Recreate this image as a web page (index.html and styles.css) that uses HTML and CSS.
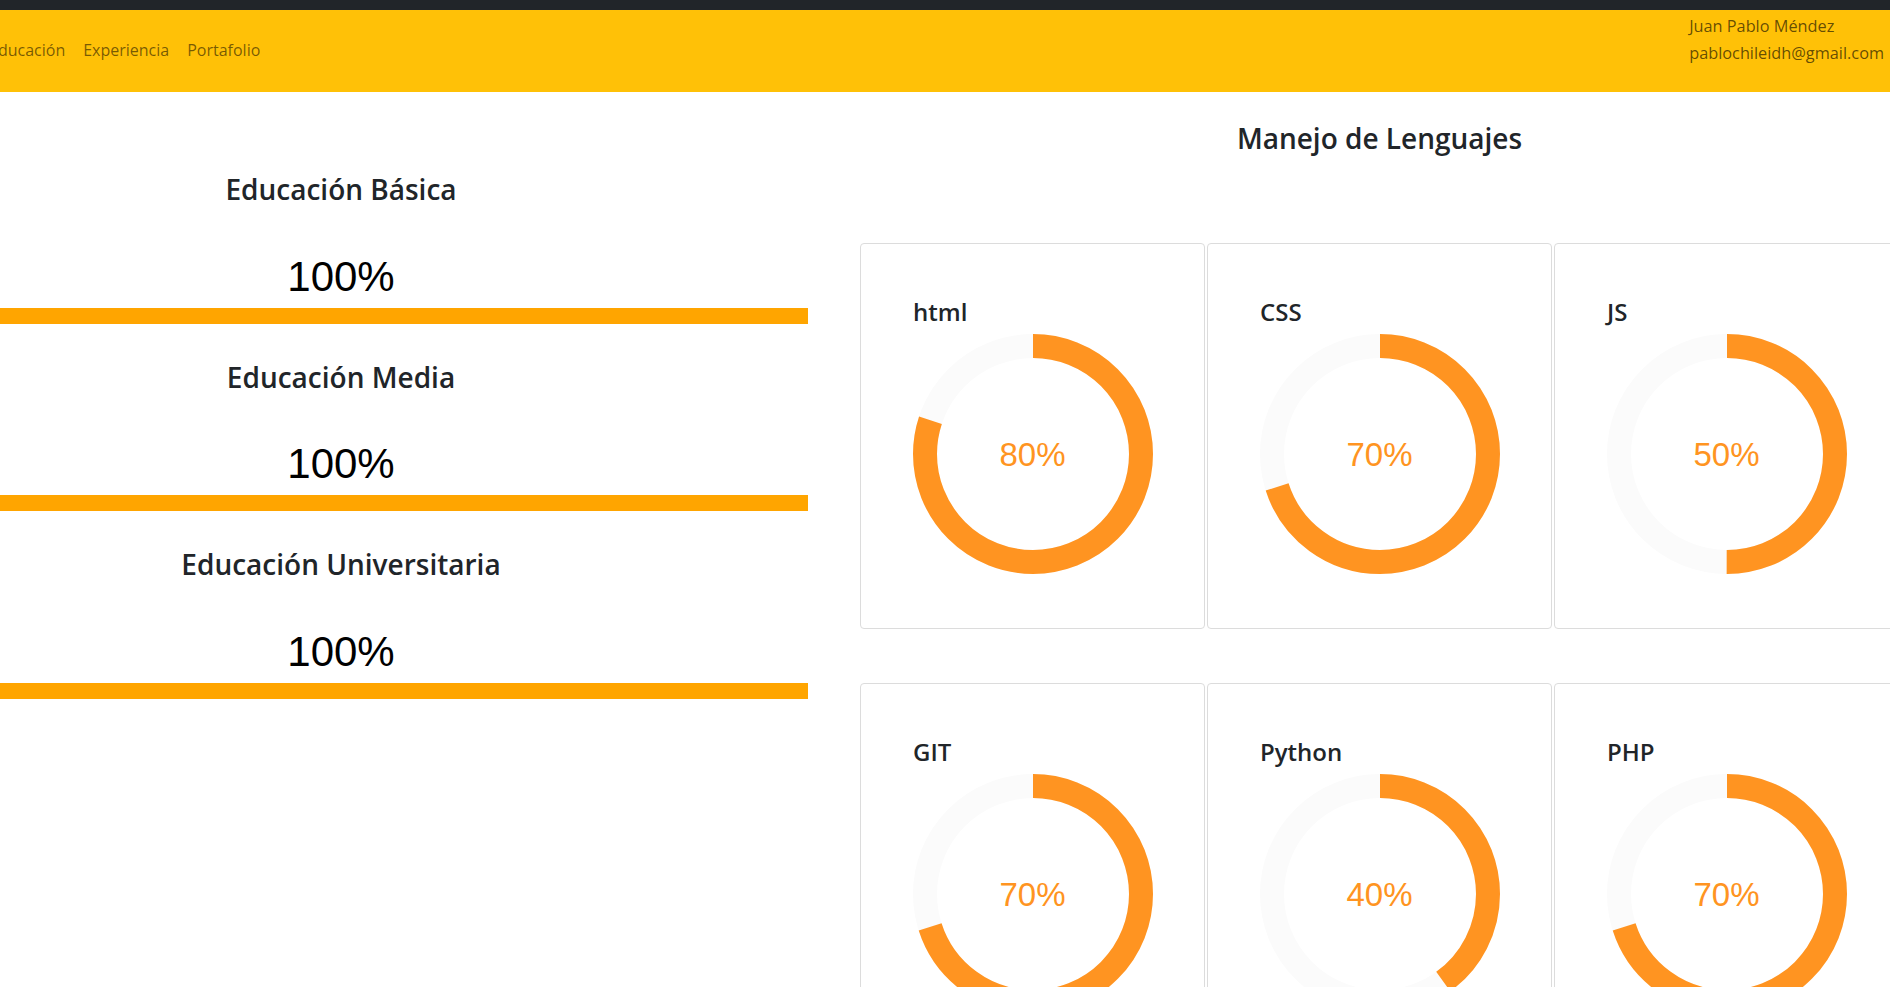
FILE: index.html
```html
<!DOCTYPE html>
<html lang="es">
<head>
<meta charset="utf-8">
<title>Juan Pablo Méndez</title>
<link rel="stylesheet" href="styles.css">
</head>
<body>
<div class="topbar"></div>
<header class="navbar">
  <nav class="nav">
    <a class="nav-link" href="#">Educación</a>
    <a class="nav-link" href="#">Experiencia</a>
    <a class="nav-link" href="#">Portafolio</a>
  </nav>
  <div class="contact">
    <div>Juan Pablo Méndez</div>
    <div>pablochileidh@gmail.com</div>
  </div>
</header>
<main class="main">
  <section class="edu">
    <div class="edu-item">
      <h3 class="heading">Educación Básica</h3>
      <div class="edu-pct">100%</div>
      <div class="bar"><div class="bar-fill" style="width:100%"></div></div>
    </div>
    <div class="edu-item">
      <h3 class="heading">Educación Media</h3>
      <div class="edu-pct">100%</div>
      <div class="bar"><div class="bar-fill" style="width:100%"></div></div>
    </div>
    <div class="edu-item">
      <h3 class="heading">Educación Universitaria</h3>
      <div class="edu-pct">100%</div>
      <div class="bar"><div class="bar-fill" style="width:100%"></div></div>
    </div>
  </section>
  <section class="langs">
    <h3 class="heading langs-title">Manejo de Lenguajes</h3>
    <div class="cards">
      <div class="card">
        <h4 class="card-title">html</h4>
        <div class="ring">
          <svg class="ring-svg" width="240" height="240" viewBox="0 0 240 240"><circle class="track" cx="120" cy="120" r="108"/><circle class="prog" cx="120" cy="120" r="108" stroke-dasharray="542.87 678.58"/></svg>
          <span class="ring-label">80%</span>
        </div>
      </div>
      <div class="card">
        <h4 class="card-title">CSS</h4>
        <div class="ring">
          <svg class="ring-svg" width="240" height="240" viewBox="0 0 240 240"><circle class="track" cx="120" cy="120" r="108"/><circle class="prog" cx="120" cy="120" r="108" stroke-dasharray="475.01 678.58"/></svg>
          <span class="ring-label">70%</span>
        </div>
      </div>
      <div class="card">
        <h4 class="card-title">JS</h4>
        <div class="ring">
          <svg class="ring-svg" width="240" height="240" viewBox="0 0 240 240"><circle class="track" cx="120" cy="120" r="108"/><circle class="prog" cx="120" cy="120" r="108" stroke-dasharray="339.29 678.58"/></svg>
          <span class="ring-label">50%</span>
        </div>
      </div>
      <div class="card">
        <h4 class="card-title">GIT</h4>
        <div class="ring">
          <svg class="ring-svg" width="240" height="240" viewBox="0 0 240 240"><circle class="track" cx="120" cy="120" r="108"/><circle class="prog" cx="120" cy="120" r="108" stroke-dasharray="475.01 678.58"/></svg>
          <span class="ring-label">70%</span>
        </div>
      </div>
      <div class="card">
        <h4 class="card-title">Python</h4>
        <div class="ring">
          <svg class="ring-svg" width="240" height="240" viewBox="0 0 240 240"><circle class="track" cx="120" cy="120" r="108"/><circle class="prog" cx="120" cy="120" r="108" stroke-dasharray="271.43 678.58"/></svg>
          <span class="ring-label">40%</span>
        </div>
      </div>
      <div class="card">
        <h4 class="card-title">PHP</h4>
        <div class="ring">
          <svg class="ring-svg" width="240" height="240" viewBox="0 0 240 240"><circle class="track" cx="120" cy="120" r="108"/><circle class="prog" cx="120" cy="120" r="108" stroke-dasharray="475.01 678.58"/></svg>
          <span class="ring-label">70%</span>
        </div>
      </div>
    </div>
  </section>
</main>
</body>
</html>
```
FILE: styles.css
```css
html, body {
  margin: 0;
  padding: 0;
  overflow: hidden;
  background: #fff;
}
body {
  font-family: "Open Sans", "Noto Sans", sans-serif;
  color: #212529;
  width: 1890px;
  height: 987px;
}
.topbar {
  height: 10px;
  background: #212529;
}
.navbar {
  height: 82px;
  background: #ffc107;
  display: flex;
  justify-content: space-between;
  align-items: center;
  box-sizing: border-box;
}
.nav {
  display: flex;
  margin-left: -20px;
  margin-top: -3px;
}
.nav-link {
  padding: 0 9px;
  font-size: 16px;
  line-height: 24px;
  color: rgba(0, 0, 0, 0.55);
  text-decoration: none;
}
.contact {
  align-self: flex-start;
  margin-top: 3px;
  padding-right: 6px;
  font-size: 16.3px;
  line-height: 27px;
  color: rgba(0, 0, 0, 0.62);
}
.main {
  display: flex;
  align-items: flex-start;
}
.heading {
  margin: 0;
  font-size: 28px;
  font-weight: 600;
  line-height: 1.2;
  text-align: center;
  color: #212529;
}
.edu {
  flex: none;
  width: 934px;
  margin-left: -126px;
  padding-top: 81px;
  display: flex;
  flex-direction: column;
  gap: 37px;
}
.edu-pct {
  margin-top: 46px;
  font-family: "Liberation Sans", Arial, sans-serif;
  font-size: 42px;
  line-height: 47px;
  text-align: center;
  color: #000;
}
.bar {
  margin-top: 8px;
  height: 16px;
}
.bar-fill {
  height: 100%;
  background: #ffa500;
}
.langs {
  flex: none;
  width: 1039px;
  margin-left: 52px;
  padding-top: 30px;
}
.langs-title {
  margin-bottom: 87px;
}
.cards {
  display: grid;
  grid-template-columns: repeat(3, 345px);
  column-gap: 2px;
  row-gap: 54px;
}
.card {
  box-sizing: border-box;
  height: 386px;
  border: 1px solid #dcdcdc;
  border-radius: 4px;
  padding: 54px 52px 0;
  display: flex;
  flex-direction: column;
}
.card-title {
  margin: 0 0 8px;
  font-size: 24px;
  font-weight: 600;
  line-height: 1.2;
  color: #212529;
}
.ring {
  display: grid;
  place-items: center;
  align-self: center;
}
.ring-svg, .ring-label {
  grid-area: 1 / 1;
}
.ring-svg {
  display: block;
}
.track {
  fill: none;
  stroke: #fbfbfb;
  stroke-width: 24;
}
.prog {
  fill: none;
  stroke: #ff9421;
  stroke-width: 24;
  transform: rotate(-90deg);
  transform-origin: 120px 120px;
}
.ring-label {
  font-family: "Liberation Sans", Arial, sans-serif;
  font-size: 33px;
  color: #ff9421;
  margin-top: 2px;
}
```
